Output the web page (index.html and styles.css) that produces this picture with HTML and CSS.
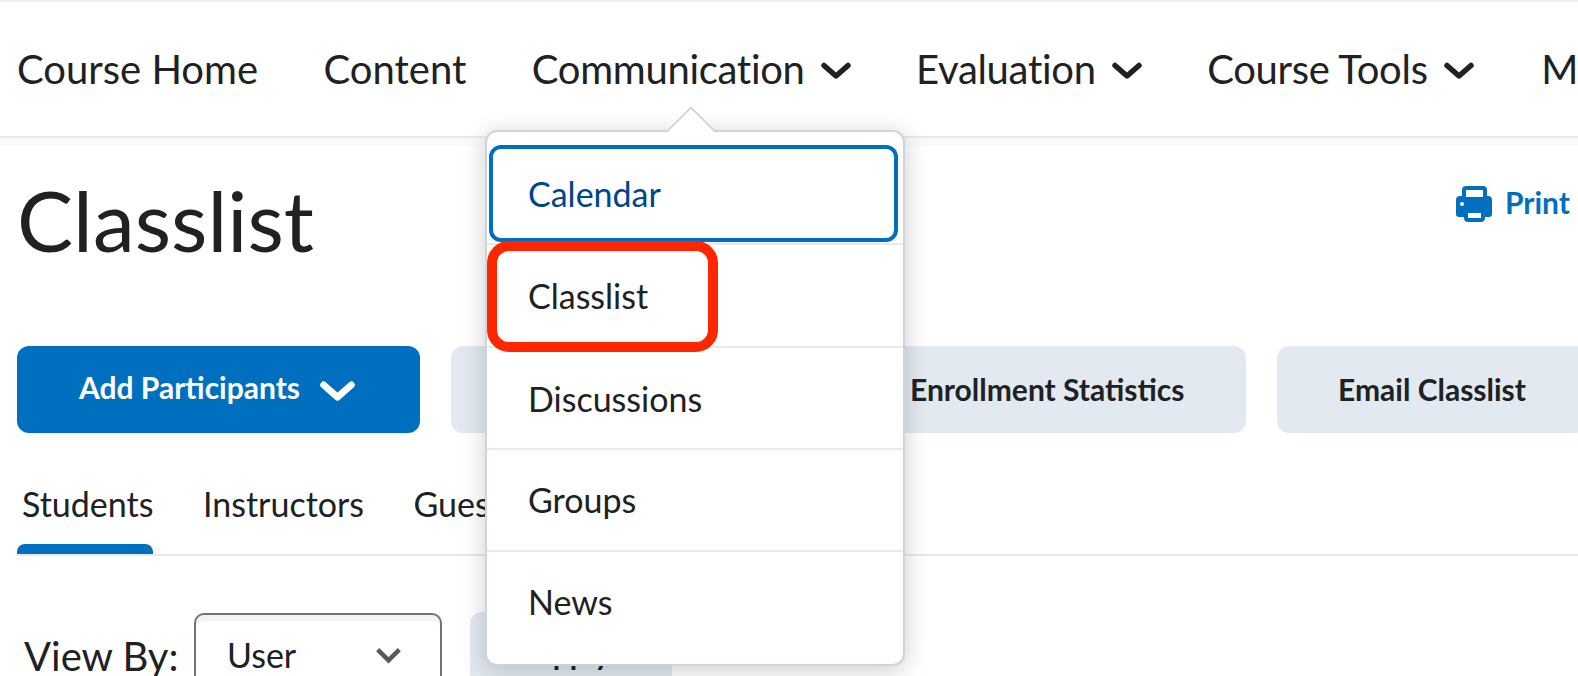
FILE: index.html
```html
<!DOCTYPE html>
<html lang="en">
<head>
    <meta charset="UTF-8">
    <title>Classlist</title>
    <link rel="stylesheet" href="styles.css">
</head>
<body>

    <nav class="navbar">
        <a class="nav-item">Course Home</a>
        <a class="nav-item">Content</a>
        <a class="nav-item nav-drop">Communication
            <svg class="chev" viewBox="0 0 30 20"><path d="M3 3.5l12 10.5 12-10.5"/></svg>
        </a>
        <a class="nav-item nav-drop">Evaluation
            <svg class="chev" viewBox="0 0 30 20"><path d="M3 3.5l12 10.5 12-10.5"/></svg>
        </a>
        <a class="nav-item nav-drop">Course Tools
            <svg class="chev" viewBox="0 0 30 20"><path d="M3 3.5l12 10.5 12-10.5"/></svg>
        </a>
        <a class="nav-item nav-more">More</a>
    </nav>
    <div class="nav-strip"></div>

    <main class="page">
        <div class="title-row">
            <h1>Classlist</h1>
            <a class="print-link">
                <svg class="print-icon" viewBox="0 0 36 36">
                    <path fill-rule="evenodd" d="M10 0h17a4 4 0 0 1 4 4v6h1a4 4 0 0 1 4 4v14a3 3 0 0 1-3 3h-4v1a4 4 0 0 1-4 4H12a4 4 0 0 1-4-4v-1H3a3 3 0 0 1-3-3V14a4 4 0 0 1 4-4h2V4a4 4 0 0 1 4-4zM10 4v7h17V4zM12 27v5h13v-5z"/>
                    <circle class="print-dot" cx="6" cy="18" r="2"/>
                </svg>
                Print
            </a>
        </div>

        <div class="btn-row">
            <button class="btn btn-primary"><span class="btn-label">Add Participants</span>
                <svg class="chev chev-btn" viewBox="0 0 30 20"><path d="M3 3.5l12 10.5 12-10.5"/></svg>
            </button>
            <button class="btn btn-first"></button>
            <button class="btn btn-stats">Enrollment Statistics</button>
            <button class="btn btn-email">Email Classlist</button>
        </div>

        <div class="tabs">
            <a class="tab active">Students</a>
            <a class="tab">Instructors</a>
            <a class="tab">Guests</a>
        </div>

        <div class="filter-row">
            <span class="filter-label">View By:</span>
            <div class="select">
                User
                <svg class="select-chev" viewBox="0 0 30 20"><path d="M3 4l12 12L27 4"/></svg>
            </div>
            <button class="btn btn-apply">Apply</button>
        </div>
    </main>

    <div class="menu">
        <div class="menu-arrow"></div>
        <a class="menu-item menu-focus">Calendar</a>
        <a class="menu-item menu-marked">Classlist</a>
        <a class="menu-item">Discussions</a>
        <a class="menu-item menu-groups">Groups</a>
        <a class="menu-item">News</a>
    </div>

</body>
</html>
```

FILE: styles.css
```css
html, body {
    margin: 0;
    height: 676px;
    overflow: hidden;
}
body {
    font-family: Lato, "Open Sans", sans-serif;
    color: #202122;
    background-color: #fff;
    position: relative;
}
a {
    display: inline-block;
}
.navbar {
    display: flex;
    align-items: center;
    gap: 65.5px;
    height: 134px;
    padding-left: 17px;
    border-top: 2px solid #eeeeee;
    border-bottom: 2px solid #e6eaf0;
    font-size: 40px;
    white-space: nowrap;
    overflow: hidden;
}
.nav-item {
    display: flex;
    align-items: center;
    gap: 16px;
    flex-shrink: 0;
}
.nav-drop {
    letter-spacing: -0.3px;
}
.nav-drop .chev {
    margin-top: 6px;
}
.nav-more {
    margin-left: 2px;
}
.chev {
    width: 30px;
    height: 20px;
    fill: none;
    stroke: #202122;
    stroke-width: 5.5;
    stroke-linecap: round;
    stroke-linejoin: round;
}
.nav-strip {
    height: 8px;
    background-color: #f9fafb;
}
.page {
    padding-left: 17px;
}
.title-row {
    display: flex;
    justify-content: space-between;
    height: 200px;
}
.title-row h1 {
    margin: 15px 0 0 0;
    font-size: 84px;
    font-weight: 400;
    line-height: 118px;
}
.print-link {
    display: flex;
    align-items: center;
    gap: 13px;
    height: 36px;
    margin: 38px 8px 0 0;
    font-size: 30px;
    font-weight: 700;
    color: #006fbf;
}
.print-icon {
    width: 36px;
    height: 36px;
    margin-top: 4px;
    fill: #006fbf;
}
.print-dot {
    fill: #fff;
}
.btn {
    height: 87px;
    border: none;
    border-radius: 12px;
    padding: 0 0 2px 0;
    font-family: inherit;
    font-size: 30px;
    font-weight: 700;
    color: #202122;
    background-color: #e3e9f1;
    flex-shrink: 0;
}
.btn-row {
    display: flex;
    gap: 31px;
    white-space: nowrap;
}
.btn-primary {
    display: flex;
    align-items: center;
    justify-content: center;
    gap: 20px;
    width: 403px;
    padding: 0;
    color: #fff;
    background-color: #006fbf;
}
.btn-label {
    margin-top: -6px;
}
.chev-btn {
    width: 35px;
    height: 23px;
    margin: 6px 3px 0 0;
    stroke: #fff;
    stroke-width: 6;
}
.btn-first {
    width: 368px;
}
.btn-stats {
    width: 396px;
    padding-left: 60px;
    text-align: left;
}
.btn-email {
    width: 310px;
    padding-left: 61px;
    text-align: left;
}
.tabs {
    display: flex;
    gap: 49.5px;
    height: 121px;
    border-bottom: 2px solid #e6eaf0;
    font-size: 34px;
}
.tab {
    position: relative;
    box-sizing: border-box;
    height: 121px;
    padding: 50px 0 0 0;
}
.tab:first-child {
    padding-left: 5px;
}
.tab.active::after {
    content: '';
    position: absolute;
    left: 0;
    right: 0;
    bottom: 0;
    height: 10px;
    border-radius: 8px 8px 0 0;
    background-color: #006fbf;
}
.filter-row {
    display: flex;
    align-items: flex-start;
    margin-top: 57px;
    padding-left: 7px;
}
.filter-label {
    width: 170px;
    padding-top: 19px;
    font-size: 40px;
}
.select {
    display: flex;
    justify-content: space-between;
    align-items: flex-start;
    box-sizing: border-box;
    width: 248px;
    height: 100px;
    padding: 23px 38px 0 31px;
    border: 2px solid #6e7477;
    border-radius: 10px;
    box-shadow: inset 0 7px 0 -1px #f1f3f5;
    font-size: 34px;
    line-height: 1;
}
.select-chev {
    width: 27px;
    height: 18px;
    margin-top: 8px;
    fill: none;
    stroke: #565a5c;
    stroke-width: 5;
}
.btn-apply {
    width: 202px;
    margin: -1px 0 0 28px;
    padding: 0 0 6px 0;
}
.menu {
    position: absolute;
    left: 485px;
    top: 130px;
    box-sizing: border-box;
    width: 420px;
    height: 536px;
    padding-top: 11px;
    border: 2px solid #cdd5dc;
    border-radius: 12px;
    background-color: #fff;
    box-shadow: 0 4px 24px rgba(0, 0, 0, 0.2);
    font-size: 34px;
}
.menu-arrow {
    position: absolute;
    left: 187px;
    top: -19px;
    width: 34px;
    height: 34px;
    box-sizing: border-box;
    border-top: 2px solid #cdd5dc;
    border-left: 2px solid #cdd5dc;
    border-top-left-radius: 3px;
    background-color: #fff;
    transform: rotate(45deg);
}
.menu-item {
    display: flex;
    align-items: center;
    position: relative;
    box-sizing: border-box;
    height: 102px;
    padding-left: 41px;
    border-bottom: 2px solid #e6eaf0;
}
.menu-item:last-child {
    padding-bottom: 4px;
    border-bottom: none;
}
.menu-groups {
    padding-bottom: 2px;
}
.menu-focus {
    color: #004489;
}
.menu-focus::after {
    content: '';
    position: absolute;
    left: 2px;
    right: 5px;
    top: 2px;
    height: 97px;
    box-sizing: border-box;
    border: 4px solid #006fbf;
    border-radius: 12px;
}
.menu-marked {
    height: 103px;
}
.menu-marked::after {
    content: '';
    position: absolute;
    left: 0;
    top: -4px;
    width: 231px;
    height: 111px;
    box-sizing: border-box;
    border: 10px solid #ff2600;
    border-radius: 22px;
}
```
